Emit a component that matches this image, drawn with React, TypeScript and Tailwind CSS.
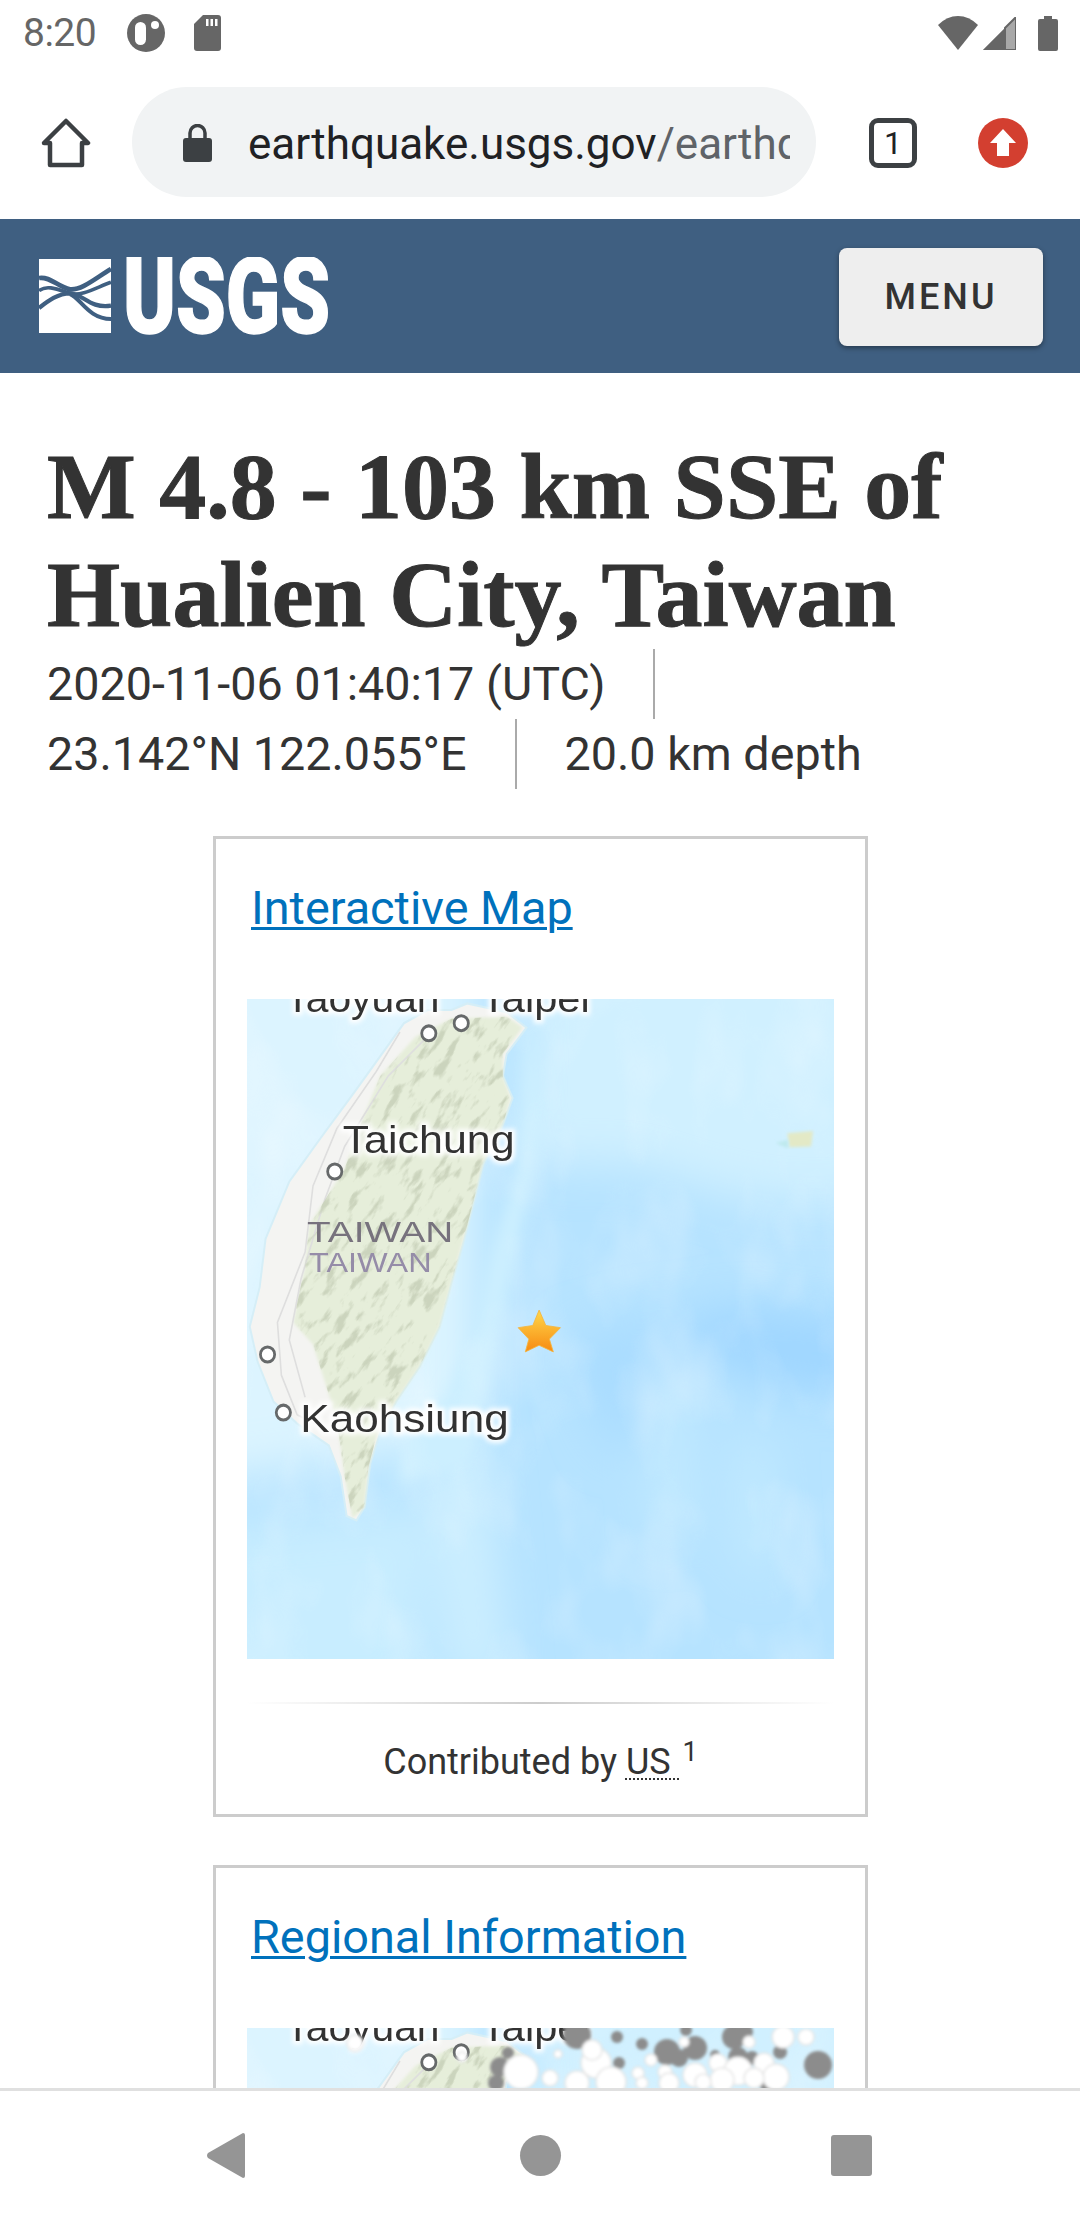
import React from 'react';

const LAND =
  'M560 70L600 55L700 75L750 110L700 170L690 220L715 270L690 330L640 420L620 490L590 600L560 690L530 790L480 880L420 960L380 1030L355 1100L340 1200L320 1230L295 1220L280 1130L250 1060L170 1010L110 960L70 870L50 790L75 700L90 590L150 460L230 360L320 250L400 150L440 100L500 70Z';
const HIGHLAND =
  'M560 90L700 85L740 110L690 170L690 220L710 270L690 330L640 420L600 560L560 690L530 790L480 880L420 960L370 1040L350 1110L340 1200L310 1225L290 1130L270 1000L210 830L160 780L190 650L200 560L290 430L330 330L380 220L470 130Z';

const labels = [
  { t: 'Taoyuan', x: 140, y: 75, w: 390, fs: 90 },
  { t: 'Taipei', x: 635, y: 75, w: 275, fs: 90 },
  { t: 'Taichung', x: 285, y: 395, w: 435, fs: 90 },
  { t: 'Kaohsiung', x: 178, y: 1030, w: 527, fs: 90 },
];

const cities = [
  [503, 123],
  [585, 100],
  [265, 437],
  [95, 853],
  [135, 985],
];

// seismicity dots on the regional map, in map pixels
const grayDots = [
  [420, 24, 13], [448, 20, 12], [487, 9, 12], [571, 37, 14], [370, 9, 6], [395, 16, 6], [439, 2, 6], [372, 35, 6], [261, 25, 6],
  [253, 39, 10], [249, 55, 8], [330, 7, 14], [521, 54, 10], [533, 24, 7], [468, 27, 5], [491, 29, 10], [432, 30, 9], [505, 30, 7], [498, 4, 8],
];
const whiteDots = [
  [274, 44, 17], [349, 35, 15], [364, 54, 15], [303, 50, 8], [330, 55, 12], [404, 32, 6], [418, 44, 7], [391, 45, 6], [422, 55, 10], [448, 47, 12],
  [471, 35, 9], [491, 43, 14], [517, 35, 10], [529, 49, 13], [437, 14, 5], [502, 14, 6], [536, 9, 11], [559, 9, 8], [311, 26, 4], [345, 22, 10],
  [475, 52, 12], [395, 55, 6], [456, 54, 8], [108, 15, 8], [215, 29, 5], [507, 50, 10],
];

const QuakeMap = ({ id, overlay = false }: { id: string; overlay?: boolean }) => (
  <svg className="block w-[587px] h-[660px]" viewBox="43 45 1485 1500" preserveAspectRatio="none">
    <defs>
      <filter id={`${id}-b`} x="-30%" y="-30%" width="160%" height="160%"><feGaussianBlur stdDeviation="55" /></filter>
      <filter id={`${id}-c`} x="-30%" y="-30%" width="160%" height="160%"><feGaussianBlur stdDeviation="18" /></filter>
      <filter id={`${id}-s`}><feGaussianBlur stdDeviation="4" /></filter>
      <filter id={`${id}-t`}><feGaussianBlur stdDeviation="1.500" /></filter>
      <filter id={`${id}-h`} x="-10%" y="-30%" width="120%" height="160%"><feGaussianBlur stdDeviation="6" /></filter>
      <filter id={`${id}-o`} x="-5%" y="-5%" width="110%" height="110%"><feGaussianBlur stdDeviation="1.500" /></filter>
      <filter id={`${id}-ridge`} x="0" y="0" width="100%" height="100%">
        <feTurbulence type="fractalNoise" baseFrequency="0.016 0.045" numOctaves="4" seed="21" />
        <feColorMatrix values="0 0 0 0 0.6  0 0 0 0 0.66  0 0 0 0 0.51  6 0 0 0 -3.2" />
        <feGaussianBlur stdDeviation="1.500" />
      </filter>
      <filter id={`${id}-mottle`} x="0" y="0" width="100%" height="100%">
        <feTurbulence type="fractalNoise" baseFrequency="0.006 0.004" numOctaves="3" seed="3" />
        <feColorMatrix values="0 0 0 0 1  0 0 0 0 1  0 0 0 0 1  1.600 0 0 0 -0.7" />
      </filter>
      <clipPath id={`${id}-hl`}><path d={HIGHLAND} /></clipPath>
      <linearGradient id={`${id}-star`} x1="0" y1="0" x2="0" y2="1">
        <stop offset="0" stopColor="#ffd84a" />
        <stop offset="1" stopColor="#f78a12" />
      </linearGradient>
    </defs>
    <rect x="43" y="45" width="1485" height="1500" fill="#b6e3ff" />
    <g filter={`url(#${id}-b)`}>
      <path d="M-100 -100H620V1050L-100 1150Z" fill="#dcf4ff" />
      <path d="M760 -100H1650V500C1350 540 1200 470 1050 430C950 410 820 440 740 400Z" fill="#d0f0ff" />
      <path d="M1120 780C1250 720 1420 760 1650 780V950C1400 950 1250 900 1150 820Z" fill="#9fd6ff" />
      <path d="M850 820L1100 760L1150 1050L950 1060Z" fill="#a9dcff" />
      <path d="M500 1100L640 1040L700 1600L560 1600Z" fill="#cdefff" />
      <path d="M1060 900L1140 880L1170 1250L1080 1280Z" fill="#c4ebff" />
      <path d="M-100 1250L500 1200L480 1650L-100 1650Z" fill="#c8edff" />
      <path d="M1280 1050L1360 1050L1380 1350L1290 1330Z" fill="#c4ebff" />
    </g>
    <path d="M760 110L740 280L730 420L660 620L620 800L540 950L440 1050L420 1150L600 1100L680 800L740 560L800 300Z" fill="#ccefff" filter={`url(#${id}-c)`} />
    <rect x="43" y="45" width="1485" height="1500" filter={`url(#${id}-mottle)`} opacity="0.35" />
    <path d={LAND} fill="#f4f4f2" stroke="#d5eef7" strokeWidth="5" />
    <path d={HIGHLAND} fill="#e6eeda" filter={`url(#${id}-s)`} />
    <g stroke="#dedede" strokeWidth="4" fill="none">
      <path d="M430 120L370 210L270 340L210 470L190 620L120 780L130 900L170 990L260 1030" />
      <path d="M500 130L400 220L290 380L240 500L180 680L150 820L190 950" />
    </g>
    <g clipPath={`url(#${id}-hl)`}>
      <rect x="-700" y="-100" width="2000" height="2000" transform="rotate(-52 400 650)" filter={`url(#${id}-ridge)`} />
    </g>
    <path d="M1410 350L1475 345L1470 380L1415 382Z" fill="#e3e9c6" filter={`url(#${id}-s)`} />
    <path d="M1380 372L1412 365L1412 385Z" fill="#bfe9ee" filter={`url(#${id}-s)`} />
    {labels.map((l) => (
      <g key={l.t} fontFamily="'Liberation Sans', sans-serif" fontSize={l.fs}>
        <text x={l.x} y={l.y} textLength={l.w} lengthAdjust="spacingAndGlyphs" fill="none" stroke="#fff" strokeWidth="14" filter={`url(#${id}-h)`}>{l.t}</text>
        <text x={l.x} y={l.y} textLength={l.w} lengthAdjust="spacingAndGlyphs" fill="#333" filter={`url(#${id}-t)`}>{l.t}</text>
      </g>
    ))}
    <g fontFamily="'Liberation Sans', sans-serif" fill="#77727d" filter={`url(#${id}-t)`}>
      <text x="195" y="598" fontSize="66" textLength="370" lengthAdjust="spacingAndGlyphs">TAIWAN</text>
      <text x="200" y="665" fontSize="62" textLength="310" lengthAdjust="spacingAndGlyphs" fill="#958ca8">TAIWAN</text>
    </g>
    {cities.map(([x, y]) => (
      <ellipse key={x} cx={x} cy={y} rx="18" ry="17" fill="#fff" stroke="#66696a" strokeWidth="7" />
    ))}
    {overlay ? (
      <g transform="translate(43 45) scale(2.53 2.273)" filter={`url(#${id}-o)`}>
        {grayDots.map(([x, y, r], i) => (
          <circle key={i} cx={x} cy={y} r={r} fill="#8c8c8c" />
        ))}
        {whiteDots.map(([x, y, r], i) => (
          <circle key={i} cx={x} cy={y} r={r} fill="#fff" stroke="#e4e4e4" strokeWidth="1.500" />
        ))}
      </g>
    ) : (
      <path
        d="M782 752L799 787L836 792L808 818L818 847L782 832L747 847L756 818L729 792L766 787Z"
        fill={`url(#${id}-star)`}
        stroke="#f4b53f"
        strokeWidth="2"
      />
    )}
  </svg>
);

const Logo = () => (
  <svg className="block" width="292" height="78" viewBox="39 258 292 78">
    <rect x="39" y="260" width="72" height="74" fill="#fff" />
    <g transform="translate(39 260) scale(0.3333) translate(-12 -15)" fill="none" stroke="#3f5f81">
      <path d="M12 72C45 66 70 100 105 106C140 110 185 70 228 45" strokeWidth="14" />
      <path d="M12 110C35 92 65 105 105 118C140 128 185 100 228 85" strokeWidth="11" />
      <path d="M12 162C40 140 70 118 105 118C145 120 165 165 228 155" strokeWidth="13" />
      <path d="M105 120C135 130 160 195 228 195" strokeWidth="12" />
    </g>
    <text x="123" y="334" fontFamily="Roboto, sans-serif" fontWeight="900" fontSize="106" textLength="207" lengthAdjust="spacingAndGlyphs" fill="#fff" stroke="#fff" strokeWidth="1.5">USGS</text>
  </svg>
);

const Card = ({ title, children }: { title: string; children: React.ReactNode }) => (
  <div className="w-[655px] ml-[166px] border-[3px] border-[#ccc] pt-[34px] px-[31px] pb-[27px]">
    <a className="block pl-[4px] text-[46.800px] leading-[70px] text-[#0071bc] underline decoration-[3px] underline-offset-[3px]">{title}</a>
    <div className="mt-[56px]">{children}</div>
  </div>
);

export default function App() {
  return (
    <div className="w-[1080px] h-[2220px] flex flex-col overflow-hidden bg-white font-['Roboto',sans-serif] text-[#333]">
      <div className="h-[66px] flex items-center justify-between pl-[23px] pr-[22px] shrink-0">
        <div className="flex items-center">
          <span className="text-[39px] leading-none text-[#666] tracking-[-0.5px]">8:20</span>
          <svg className="ml-[31px]" width="38" height="38" viewBox="0 0 38 38">
            <circle cx="19" cy="19" r="19" fill="#666" />
            <rect x="8" y="8" width="11" height="23" rx="5.5" fill="#fff" />
            <circle cx="28" cy="11" r="4" fill="#fff" />
          </svg>
          <svg className="ml-[29px]" width="27" height="36" viewBox="0 0 27 36">
            <path d="M9 0H24Q27 0 27 3V33Q27 36 24 36H3Q0 36 0 33V9Z" fill="#666" />
            <path d="M12 4H14.500V11H12ZM16.500 4H19V11H16.500ZM21 4H23.500V11H21Z" fill="#fff" />
          </svg>
        </div>
        <div className="flex items-center">
          <svg width="40" height="34" viewBox="0 0 40 34">
            <path d="M20 34L0 9Q9 0 20 0T40 9Z" fill="#666" />
          </svg>
          <svg className="ml-[5px]" width="33" height="33" viewBox="0 0 33 33">
            <path d="M33 0V33H0Z" fill="#a8a8a8" />
            <path d="M22 11V33H0Z" fill="#666" />
            <path d="M33 0V33H22V11Z" fill="none" stroke="#666" strokeWidth="2" />
          </svg>
          <svg className="ml-[22px]" width="20" height="35" viewBox="0 0 20 35">
            <path d="M6 0H14V3H18Q20 3 20 5V33Q20 35 18 35H2Q0 35 0 33V5Q0 3 2 3H6Z" fill="#666" />
          </svg>
        </div>
      </div>

      <div className="h-[154px] flex items-center shrink-0 -mt-[1px]">
        <svg className="ml-[41px] mt-[2px]" width="50" height="50" viewBox="0 0 50 50">
          <path d="M25 3L47 25H41V47H9V25H3Z" fill="none" stroke="#3c4043" strokeWidth="4.500" strokeLinejoin="round" />
        </svg>
        <div className="ml-[41px] w-[684px] h-[110px] rounded-[55px] bg-[#f1f3f4] flex items-center pl-[51px] pr-[26px]">
          <svg className="shrink-0 mt-[2px]" width="29" height="38" viewBox="0 0 29 38">
            <path d="M7 15V9A7.500 7.500 0 0 1 22 9V15" fill="none" stroke="#3c4043" strokeWidth="3.500" />
            <rect x="0" y="14" width="29" height="24" rx="3" fill="#3c4043" />
          </svg>
          <div className="ml-[36px] mt-[4px] w-[542px] overflow-hidden whitespace-nowrap text-[44px] leading-[52px] text-[#202124]">
            earthquake.usgs.gov<span className="text-[#5f6368]">/earthquakes</span>
          </div>
        </div>
        <div className="ml-[53px] mt-[2px] w-[48px] h-[50px] rounded-[9px] border-[5px] border-[#3c4043] flex items-center justify-center text-[32px] leading-none text-[#202124]">1</div>
        <svg className="ml-[61px] mt-[2px]" width="50" height="50" viewBox="0 0 50 50">
          <circle cx="25" cy="25" r="25" fill="#d33f30" />
          <path d="M25 11L38 25H31V38H19V25H12Z" fill="#fff" />
        </svg>
      </div>

      <header className="h-[154px] bg-[#3f5f81] flex items-center justify-between pl-[39px] pr-[37px] shrink-0">
        <Logo />
        <button className="mt-[2px] w-[204px] h-[98px] rounded-[8px] bg-[#eeeeee] shadow-[0_2px_5px_rgba(0,0,0,0.4)] text-[36px] font-medium tracking-[3px] text-[#333]">MENU</button>
      </header>

      <main className="flex-1 overflow-hidden px-[47px]">
        <h1 className="mt-[59px] mb-[1px] font-['Liberation_Serif',serif] font-bold text-[94px] leading-[108px] text-[#333] whitespace-nowrap [-webkit-text-stroke:1px_#333]">
          M 4.8 - 103 km SSE of
          <br />
          Hualien City, Taiwan
        </h1>
        <div className="flex flex-wrap text-[46.700px] leading-[70px]">
          <span className="pr-[48px] border-r-2 border-[#aaa]">2020-11-06 01:40:17 (UTC)</span>
          <span className="pr-[48px] border-r-2 border-[#aaa]">23.142°N 122.055°E</span>
          <span className="pl-[48px]">20.0 km depth</span>
        </div>

        <div className="mt-[47px]">
          <Card title="Interactive Map">
            <QuakeMap id="m1" />
            <div className="mt-[43px] h-[2px] bg-[linear-gradient(90deg,rgba(204,204,204,0),#ccc,rgba(204,204,204,0))]" />
            <div className="mt-[33px] text-center text-[36px] leading-[50px]">
              Contributed by{' '}
              <abbr className="no-underline">
                <span className="underline decoration-dotted decoration-[2px] underline-offset-[4px]">US&nbsp;</span>
              </abbr>
              <sup className="ml-[3px]">1</sup>
            </div>
          </Card>
        </div>
        <div className="mt-[48px]">
          <Card title="Regional Information">
            <QuakeMap id="m2" overlay />
          </Card>
        </div>
      </main>

      <nav className="h-[132px] border-t-[3px] border-[#e0e0e0] bg-white flex items-center shrink-0 relative">
        <svg className="ml-[207px]" width="38" height="45" viewBox="0 0 38 45">
          <path d="M36 0Q38 0 38 2V43Q38 45 36 45L1 25Q-1 22.500 1 20Z" fill="#959595" />
        </svg>
        <div className="ml-[275px] w-[41px] h-[41px] rounded-full bg-[#959595]" />
        <div className="ml-[270px] w-[41px] h-[41px] rounded-[3px] bg-[#959595]" />
      </nav>
    </div>
  );
}
